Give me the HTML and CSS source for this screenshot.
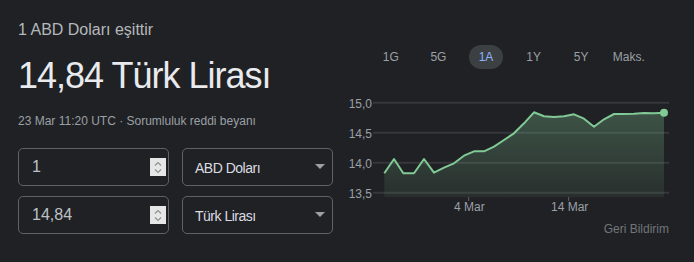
FILE: index.html
```html
<!DOCTYPE html>
<html lang="tr">
<head>
    <meta charset="UTF-8">
    <meta name="viewport" content="width=device-width, initial-scale=1.0">
    <title>Döviz Çevirici</title>
    <link rel="stylesheet" href="styles.css">
</head>
<body>
    <div class="converter">
        <div class="left">
            <div class="equals">1 ABD Doları eşittir</div>
            <div class="result">14,84 Türk Lirası</div>
            <div class="meta">23 Mar 11:20 UTC · Sorumluluk reddi beyanı</div>
            <div class="fields">
                <div class="box">
                    <span class="value">1</span>
                    <span class="spin">
                        <svg width="8" height="5" viewBox="0 0 8 5"><path d="M1 4.5L4 1.5L7 4.5" fill="none" stroke="#8e9196" stroke-width="1.2"/></svg>
                        <svg width="8" height="5" viewBox="0 0 8 5"><path d="M1 0.5L4 3.5L7 0.5" fill="none" stroke="#8e9196" stroke-width="1.2"/></svg>
                    </span>
                </div>
                <div class="box select">
                    <span class="label">ABD Doları</span>
                    <span class="caret"></span>
                </div>
                <div class="box">
                    <span class="value">14,84</span>
                    <span class="spin">
                        <svg width="8" height="5" viewBox="0 0 8 5"><path d="M1 4.5L4 1.5L7 4.5" fill="none" stroke="#8e9196" stroke-width="1.2"/></svg>
                        <svg width="8" height="5" viewBox="0 0 8 5"><path d="M1 0.5L4 3.5L7 0.5" fill="none" stroke="#8e9196" stroke-width="1.2"/></svg>
                    </span>
                </div>
                <div class="box select">
                    <span class="label">Türk Lirası</span>
                    <span class="caret"></span>
                </div>
            </div>
        </div>
        <div class="right">
            <div class="tabs">
                <div class="tab"><span>1G</span></div>
                <div class="tab"><span>5G</span></div>
                <div class="tab active"><span>1A</span></div>
                <div class="tab"><span>1Y</span></div>
                <div class="tab"><span>5Y</span></div>
                <div class="tab"><span>Maks.</span></div>
            </div>
            <svg class="chart" width="340" height="129" viewBox="0 0 340 129">
                <defs>
                    <linearGradient id="fill" x1="0" y1="0" x2="0" y2="1">
                        <stop offset="0" stop-color="#81c995" stop-opacity="0.3"/>
                        <stop offset="1" stop-color="#81c995" stop-opacity="0.08"/>
                    </linearGradient>
                </defs>
                <g class="grid">
                    <line x1="33" y1="12.7" x2="329" y2="12.7"/>
                    <line x1="33" y1="42.7" x2="329" y2="42.7"/>
                    <line x1="33" y1="72.7" x2="329" y2="72.7"/>
                    <line x1="33" y1="102.7" x2="329" y2="102.7"/>
                </g>
                <g class="ylabels">
                    <text x="32" y="17.5">15,0</text>
                    <text x="32" y="47.5">14,5</text>
                    <text x="32" y="77.5">14,0</text>
                    <text x="32" y="107.5">13,5</text>
                </g>
                <path class="area" d="M44.3 107.3 L44.3 83.3 L54 69 L63.3 83.3 L74 83.3 L84 69 L94 82.7 L104 77.7 L114 73.3 L124 65.7 L134 61.3 L144 61.3 L154 56.7 L164 50 L174 43.3 L184 33.3 L194 22.3 L204 26.3 L214 27 L224 26.3 L234 24.3 L244 28.7 L254 36.7 L264 29.3 L274 24 L284 24 L294 23.7 L304 23 L314 23.3 L324 22.7 L324 107.3 Z"/>
                <path class="line" d="M44.3 83.3 L54 69 L63.3 83.3 L74 83.3 L84 69 L94 82.7 L104 77.7 L114 73.3 L124 65.7 L134 61.3 L144 61.3 L154 56.7 L164 50 L174 43.3 L184 33.3 L194 22.3 L204 26.3 L214 27 L224 26.3 L234 24.3 L244 28.7 L254 36.7 L264 29.3 L274 24 L284 24 L294 23.7 L304 23 L314 23.3 L324 22.7"/>
                <circle class="dot" cx="324" cy="22.7" r="4"/>
                <g class="ticks">
                    <line x1="128.7" y1="107" x2="128.7" y2="111"/>
                    <line x1="228.7" y1="107" x2="228.7" y2="111"/>
                </g>
                <g class="xlabels">
                    <text x="129.3" y="121">4 Mar</text>
                    <text x="229.7" y="121">14 Mar</text>
                </g>
            </svg>
            <div class="feedback">Geri Bildirim</div>
        </div>
    </div>
</body>
</html>
```
FILE: styles.css
```css
body {
    margin: 0;
    background-color: #202124;
    font-family: "Liberation Sans", Arial, sans-serif;
    color: #e8eaed;
}
.converter {
    display: flex;
}
.left {
    width: 322px;
    padding: 20px 0 0 18px;
}
.equals {
    font-size: 16px;
    line-height: 20px;
    color: #b4b8bc;
}
.result {
    margin-top: 14px;
    font-size: 36px;
    line-height: 44px;
    letter-spacing: -1px;
    color: #e8eaed;
}
.meta {
    margin-top: 15px;
    font-size: 12px;
    line-height: 16px;
    color: #9aa0a6;
}
.fields {
    margin-top: 19px;
    display: grid;
    grid-template-columns: 151px 151px;
    column-gap: 13px;
    row-gap: 10px;
}
.box {
    box-sizing: border-box;
    height: 38px;
    border: 1px solid #5f6368;
    border-radius: 5px;
    display: flex;
    align-items: center;
    padding: 0 2px 0 13px;
}
.value {
    flex: 1;
    font-size: 16px;
    color: #bdc1c6;
}
.spin {
    width: 16px;
    height: 18px;
    background-color: #e6e6e6;
    display: flex;
    flex-direction: column;
    align-items: center;
    justify-content: center;
    gap: 3px;
}
.spin svg {
    display: block;
}
.select {
    padding: 0 7px 0 12px;
}
.label {
    flex: 1;
    font-size: 14px;
    letter-spacing: -0.5px;
    color: #dadce0;
    padding-top: 2px;
}
.caret {
    width: 0;
    height: 0;
    border-left: 5px solid transparent;
    border-right: 5px solid transparent;
    border-top: 5px solid #9aa0a6;
    margin-top: -2px;
}
.right {
    flex: 1;
}
.tabs {
    display: grid;
    grid-template-columns: repeat(6, 47.6px);
    padding: 45px 0 0 27px;
}
.tab {
    display: flex;
    justify-content: center;
}
.tab span {
    height: 24px;
    line-height: 24px;
    padding: 0 10px;
    border-radius: 12px;
    font-size: 12px;
    color: #9aa0a6;
}
.tab.active span {
    background-color: #3c4043;
    color: #8ab4f8;
}
.chart {
    display: block;
    margin-top: 21px;
}
.grid line {
    stroke: #35373b;
    stroke-width: 2;
}
.ylabels text {
    font-size: 12px;
    fill: #9aa0a6;
    text-anchor: end;
}
.area {
    fill: url(#fill);
}
.line {
    fill: none;
    stroke: #81c995;
    stroke-width: 2;
    stroke-linejoin: round;
}
.dot {
    fill: #81c995;
}
.ticks line {
    stroke: #5f6368;
    stroke-width: 1;
}
.xlabels text {
    font-size: 12px;
    fill: #9aa0a6;
    text-anchor: middle;
}
.feedback {
    margin-top: 2px;
    font-size: 12px;
    line-height: 16px;
    color: #70757a;
    text-align: right;
    padding-right: 25px;
}
```
